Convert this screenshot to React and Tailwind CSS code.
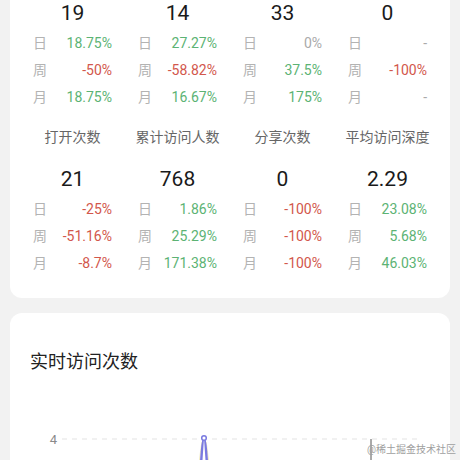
import React from "react";

const G = "text-[#5cb374]";
const R = "text-[#d2574c]";
const N = "text-[#aaaaaa]";

const block1 = [
  { num: "19", rows: [["18.75%", G], ["-50%", R], ["18.75%", G]] },
  { num: "14", rows: [["27.27%", G], ["-58.82%", R], ["16.67%", G]] },
  { num: "33", rows: [["0%", N], ["37.5%", G], ["175%", G]] },
  { num: "0", rows: [["-", N], ["-100%", R], ["-", N]] },
];

const block2 = [
  { label: "打开次数", num: "21", rows: [["-25%", R], ["-51.16%", R], ["-8.7%", R]] },
  { label: "累计访问人数", num: "768", rows: [["1.86%", G], ["25.29%", G], ["171.38%", G]] },
  { label: "分享次数", num: "0", rows: [["-100%", R], ["-100%", R], ["-100%", R]] },
  { label: "平均访问深度", num: "2.29", rows: [["23.08%", G], ["5.68%", G], ["46.03%", G]] },
];

const tags = ["日", "周", "月"];

function Col({ item }) {
  return (
    <div className="flex flex-col items-center">
      {item.label && (
        <div className="h-[20px] leading-[20px] text-[14px] text-[#666666] mb-[19px] whitespace-nowrap">
          {item.label}
        </div>
      )}
      <div className="h-[26px] leading-[26px] text-[21px] text-[#1a1a1a]">{item.num}</div>
      <div className="mt-[3.5px] w-[79px] flex flex-col">
        {item.rows.map(([v, c], i) => (
          <div key={i} className="h-[27px] leading-[27px] flex justify-between text-[14px]">
            <span className="text-[#b3b3b3]">{tags[i]}</span>
            <span className={c}>{v}</span>
          </div>
        ))}
      </div>
    </div>
  );
}

export default function App() {
  return (
    <div
      className="w-[460px] h-[460px] overflow-hidden bg-[#f2f2f2] px-[10px] relative"
      style={{ fontFamily: 'Roboto, "Noto Sans CJK SC", sans-serif' }}
    >
      <div className="-mt-[30px] bg-white rounded-[12px] pt-[30px] px-[10px] pb-[21.5px]">
        <div className="grid grid-cols-4">
          {block1.map((it, i) => (
            <Col key={i} item={it} />
          ))}
        </div>
        <div className="grid grid-cols-4 mt-[16.5px]">
          {block2.map((it, i) => (
            <Col key={i} item={it} />
          ))}
        </div>
      </div>
      <div className="mt-[15px] bg-white rounded-[12px] pt-[37px] h-[200px]">
        <div className="px-[20px] h-[24px] leading-[24px] text-[18px] text-[#222222]">实时访问次数</div>
        <svg width="440" height="120" viewBox="0 0 440 120" className="block">
          <text x="47" y="70" textAnchor="end" fontSize="13" fill="#8a8a8a" fontFamily="Roboto, sans-serif">4</text>
          <line x1="52" y1="65" x2="408" y2="65" stroke="#e3e3e3" strokeWidth="1" strokeDasharray="5 5" />
          <path d="M185 120 C189 92 191 72 192 68" stroke="#f3ecc0" strokeWidth="1" fill="none" />
          <path d="M196 68 C197 72 199 92 203 120" stroke="#f3ecc0" strokeWidth="1" fill="none" />
          <path
            d="M189 120 C191 90 192.5 64 194 64 C195.5 64 197 90 199 120"
            stroke="#7b7be0"
            strokeWidth="2.5"
            fill="none"
          />
          <circle cx="194" cy="64" r="2.3" fill="#ffffff" stroke="#7b7be0" strokeWidth="1.5" />
          <line x1="361" y1="65" x2="361" y2="120" stroke="#555555" strokeWidth="1" />
        </svg>
      </div>
      <div className="absolute right-[4px] top-[444px] text-[10px] leading-[12px] text-[#a0a0a0] whitespace-nowrap">
        @稀土掘金技术社区
      </div>
    </div>
  );
}
